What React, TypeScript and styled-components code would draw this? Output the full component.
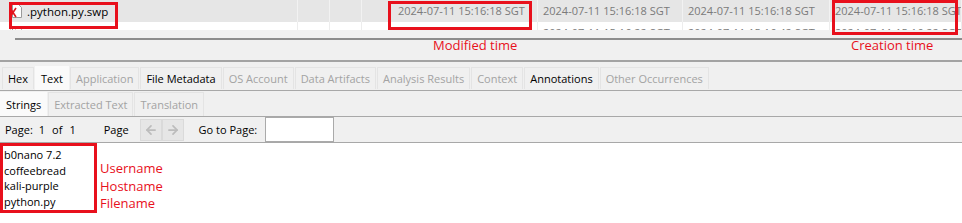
import styled, { createGlobalStyle } from 'styled-components';
import { ArrowLeft, ArrowRight } from 'lucide-react';

const GlobalStyle = createGlobalStyle`
  body {
    margin: 0;
    background: #f0f0f0;
    font-family: "Open Sans", "Noto Sans", sans-serif;
    font-size: 11px;
    color: #000;
  }
`;

const COLS = [298, 32, 32, 176, 145, 147, 132];

const rows = [
  {
    name: '.python.py.swp',
    cells: ['', '', '2024-07-11 15:16:18 SGT', '2024-07-11 15:16:18 SGT', '2024-07-11 15:16:18 SGT', '2024-07-11 15:16:18 SGT'],
    selected: true,
  },
  {
    name: 'python.py',
    cells: ['', '', '', '2024-07-11 15:16:22 SGT', '2024-07-11 15:16:42 SGT', '2024-07-11 15:16:22 SGT'],
    selected: false,
  },
];

const tabs = [
  { label: 'Hex', enabled: true },
  { label: 'Text', enabled: true, active: true },
  { label: 'Application', enabled: false },
  { label: 'File Metadata', enabled: true },
  { label: 'OS Account', enabled: false },
  { label: 'Data Artifacts', enabled: false },
  { label: 'Analysis Results', enabled: false },
  { label: 'Context', enabled: false },
  { label: 'Annotations', enabled: true },
  { label: 'Other Occurrences', enabled: false },
];

const subTabs = [
  { label: 'Strings', enabled: true, active: true },
  { label: 'Extracted Text', enabled: false },
  { label: 'Translation', enabled: false },
];

const strings = ['b0nano 7.2', 'coffeebread', 'kali-purple', 'python.py'];
const notes = ['Username', 'Hostname', 'Filename'];

function FileIcon() {
  return (
    <svg width="14" height="16" viewBox="0 0 14 16">
      <path d="M3.5 1.5h6l3 3v10h-9z" fill="#fff" stroke="#9a9a9a" />
      <path d="M1 5l6 9M7 5l-6 9" stroke="#e0141c" strokeWidth="1.6" />
    </svg>
  );
}

export default function App() {
  return (
    <>
      <GlobalStyle />
      <Top>
        <Table>
          {rows.map((r, i) => (
            <Row key={i} selected={r.selected}>
              <Cell w={COLS[0]} selected={r.selected}>
                <NameWrap>
                  <FileIcon />
                  <FileName>{r.name}</FileName>
                </NameWrap>
              </Cell>
              {r.cells.map((c, j) => (
                <Cell key={j} w={COLS[j + 1]} selected={r.selected} pad={j === 2 ? 36 : 5}>
                  <DateText>{c}</DateText>
                </Cell>
              ))}
            </Row>
          ))}
        </Table>
        <ScrollArea>
          <ScrollThumb />
        </ScrollArea>
        <Highlight x={9} y={2} w={109} h={27} />
        <Highlight x={388} y={1} w={144} h={29} />
        <Highlight x={832} y={0} w={126} h={35} />
        <Note x={433} y={36}>Modified time</Note>
        <Note x={851} y={36}>Creation time</Note>
      </Top>
      <TabBar>
        {tabs.map(t => (
          <Tab key={t.label} enabled={t.enabled} active={t.active}>{t.label}</Tab>
        ))}
      </TabBar>
      <SubTabBar>
        {subTabs.map(t => (
          <SubTab key={t.label} enabled={t.enabled} active={t.active}>{t.label}</SubTab>
        ))}
      </SubTabBar>
      <Toolbar>
        <Label>Page:</Label>
        <Label gap={6}>1</Label>
        <Label gap={7}>of</Label>
        <Label gap={7}>1</Label>
        <Label gap={28}>Page</Label>
        <NavGroup>
          <NavButton><ArrowLeft size={14} strokeWidth={3} color="#bcbcbc" /></NavButton>
          <NavButton><ArrowRight size={14} strokeWidth={3} color="#bcbcbc" /></NavButton>
        </NavGroup>
        <Label gap={15}>Go to Page:</Label>
        <PageInput />
      </Toolbar>
      <Content>
        <StringsBox>
          {strings.map(s => <StringLine key={s}>{s}</StringLine>)}
        </StringsBox>
        <Notes>
          {notes.map(n => <NoteLine key={n}>{n}</NoteLine>)}
        </Notes>
      </Content>
    </>
  );
}

const Top = styled.div`
  position: relative;
  height: 62px;
`;

const Table = styled.div`
  height: 30px;
  overflow: hidden;
  background: #fff;
`;

const Row = styled.div<{ selected: boolean }>`
  display: flex;
  height: 22px;
  background: ${p => (p.selected ? '#e6e6e6' : '#fff')};
`;

const Cell = styled.div<{ w: number; selected: boolean; pad?: number }>`
  width: ${p => p.w}px;
  flex: none;
  box-sizing: border-box;
  padding-left: ${p => p.pad ?? 8}px;
  border-right: 1px solid ${p => (p.selected ? '#f2f2f2' : '#ededed')};
  display: flex;
  align-items: center;
  overflow: hidden;
  white-space: nowrap;
`;

const NameWrap = styled.div`
  display: flex;
  align-items: center;
  gap: 4px;
  margin-left: 1px;
`;

const FileName = styled.span`
  font-size: 11.5px;
  color: #000;
`;

const DateText = styled.span`
  font-size: 11px;
  color: #7a7a7a;
  margin-top: -2px;
`;

const ScrollArea = styled.div`
  height: 32px;
  padding: 8px 0 0 15px;
  box-sizing: border-box;
  border-bottom: 2px solid #a3a3a3;
`;

const ScrollThumb = styled.div`
  height: 2px;
  background: #8c8c8c;
`;

const Highlight = styled.div<{ x: number; y: number; w: number; h: number }>`
  position: absolute;
  left: ${p => p.x}px;
  top: ${p => p.y}px;
  width: ${p => p.w}px;
  height: ${p => p.h}px;
  box-sizing: border-box;
  border: 3px solid #e8101c;
`;

const Note = styled.div<{ x: number; y: number }>`
  position: absolute;
  left: ${p => p.x}px;
  top: ${p => p.y}px;
  font-size: 13px;
  color: #e8101c;
  white-space: nowrap;
`;

const TabBar = styled.div`
  display: flex;
  align-items: flex-end;
  height: 29px;
  padding-left: 2px;
  border-bottom: 1px solid #a8a8a8;
  box-sizing: border-box;
`;

const Tab = styled.div<{ enabled: boolean; active?: boolean }>`
  height: ${p => (p.active ? 24 : 22)}px;
  margin-bottom: ${p => (p.active ? 0 : 1)}px;
  margin-right: 1px;
  padding: 0 5px;
  display: flex;
  align-items: center;
  box-sizing: border-box;
  background: ${p => (p.active ? '#fafafa' : '#f0f0f0')};
  border: 1px solid ${p => (p.active ? '#fafafa' : '#e4e4e4')};
  border-bottom: none;
  color: ${p => (p.enabled ? '#000' : '#a3a3a3')};
  white-space: nowrap;
`;

const SubTabBar = styled.div`
  display: flex;
  align-items: flex-end;
  height: 26px;
  border-bottom: 1px solid #a8a8a8;
  box-sizing: border-box;
`;

const SubTab = styled.div<{ enabled: boolean; active?: boolean }>`
  height: 24px;
  margin-right: 1px;
  padding: 0 5px;
  display: flex;
  align-items: center;
  box-sizing: border-box;
  background: ${p => (p.active ? '#fafafa' : '#f0f0f0')};
  border: 1px solid ${p => (p.active ? '#fafafa' : '#e4e4e4')};
  border-bottom: none;
  color: ${p => (p.enabled ? '#000' : '#a3a3a3')};
`;

const Toolbar = styled.div`
  display: flex;
  align-items: center;
  height: 26px;
  padding-left: 5px;
  border-bottom: 1px solid #a8a8a8;
  box-sizing: border-box;
`;

const Label = styled.span<{ gap?: number }>`
  margin-left: ${p => p.gap ?? 0}px;
  white-space: nowrap;
`;

const NavGroup = styled.div`
  display: flex;
  margin-left: 11px;
`;

const NavButton = styled.div`
  width: 22px;
  height: 22px;
  display: flex;
  align-items: center;
  justify-content: center;
  background: #e6e6e6;
  border: 1px solid #dadada;
  box-sizing: border-box;
`;

const PageInput = styled.div`
  width: 69px;
  height: 25px;
  margin-left: 8px;
  background: #fff;
  border: 1px solid #aaa;
  box-sizing: border-box;
`;

const Content = styled.div`
  display: flex;
  align-items: flex-start;
  background: #fff;
  height: 80px;
`;

const StringsBox = styled.div`
  width: 97px;
  box-sizing: border-box;
  border: 3px solid #e8101c;
  padding: 1px 0 0 1px;
`;

const StringLine = styled.div`
  line-height: 15.67px;
  white-space: nowrap;
`;

const Notes = styled.div`
  padding: 17px 0 0 3px;
`;

const NoteLine = styled.div`
  font-size: 13px;
  line-height: 17.5px;
  color: #e8101c;
`;
